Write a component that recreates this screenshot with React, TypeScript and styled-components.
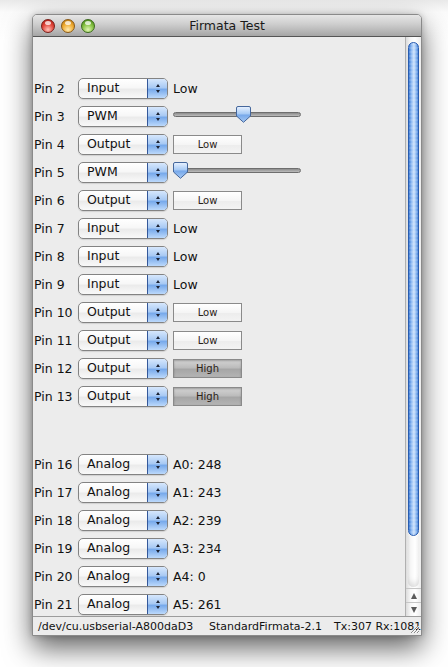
import React from 'react';
import styled, { createGlobalStyle } from 'styled-components';

const Global = createGlobalStyle`
  html, body { margin: 0; padding: 0; background: #fff; }
  body { font-family: "DejaVu Sans", "Liberation Sans", sans-serif; }
`;

const Page = styled.div`
  width: 448px;
  height: 667px;
  box-sizing: border-box;
  padding: 14px 0 0 32px;
  overflow: hidden;
  background: linear-gradient(#e9e9e9 0px, #fbfbfb 12px, #ffffff 40px);
`;

const Window = styled.div`
  width: 390px;
  height: 622px;
  box-sizing: border-box;
  display: flex;
  flex-direction: column;
  border: 1px solid #8a8a8a;
  border-radius: 5px 5px 0 0;
  background: #ececec;
  box-shadow: 0 12px 28px rgba(0, 0, 0, 0.62), 0 0 6px rgba(0, 0, 0, 0.2);
  overflow: hidden;
`;

const TitleBar = styled.div`
  height: 22px;
  flex: none;
  box-sizing: border-box;
  display: grid;
  grid-template-columns: 1fr auto 1fr;
  align-items: center;
  padding: 0 8px;
  background: linear-gradient(#e6e6e6, #cdcdcd 45%, #b4b4b4 80%, #a5a5a5);
  border-bottom: 1px solid #555;
`;

const Lights = styled.div`
  display: flex;
  gap: 6px;
`;

const lightColors: Record<string, [string, string, string, string]> = {
  red: ['#ffc0b8', '#e2483d', '#a8160e', '#7a1e18'],
  yellow: ['#ffeab0', '#f0ad33', '#b3700c', '#8a5a16'],
  green: ['#e0f6b2', '#86c243', '#3f7c12', '#3b6a1c'],
};

const Light = styled.span<{ $c: string }>`
  position: relative;
  width: 14px;
  height: 14px;
  box-sizing: border-box;
  border-radius: 50%;
  border: 1px solid ${(p) => lightColors[p.$c][3]};
  background: radial-gradient(
    circle at 50% 80%,
    ${(p) => lightColors[p.$c][0]} 0%,
    ${(p) => lightColors[p.$c][1]} 50%,
    ${(p) => lightColors[p.$c][2]} 100%
  );
  &::after {
    content: '';
    position: absolute;
    left: 3px;
    top: 1px;
    width: 6px;
    height: 4px;
    border-radius: 50%;
    background: rgba(255, 255, 255, 0.75);
  }
`;

const Title = styled.div`
  font-size: 12.5px;
  color: #1a1a1a;
  white-space: nowrap;
`;

const Body = styled.div`
  flex: 1;
  min-height: 0;
  display: flex;
`;

const Content = styled.div`
  flex: 1;
  min-width: 0;
  overflow: hidden;
  padding: 37px 0 0 1px;
  box-sizing: border-box;
  background: #ececec;
`;

const Row = styled.div`
  height: 28px;
  display: grid;
  grid-template-columns: 39px 90px auto;
  column-gap: 5px;
  align-items: center;
  font-size: 12.5px;
  color: #111;
`;

const PinLabel = styled.span`
  white-space: nowrap;
`;

const Select = styled.div`
  height: 21px;
  box-sizing: border-box;
  display: flex;
  border: 1px solid #838383;
  border-radius: 5px;
  overflow: hidden;
  background: linear-gradient(#ffffff, #f7f7f7 45%, #ebebeb 55%, #f9f9f9);
  box-shadow: 0 1px 1px rgba(0, 0, 0, 0.12);
`;

const SelectText = styled.span`
  flex: 1;
  padding-left: 8px;
  line-height: 18px;
  font-size: 12.5px;
  color: #111;
`;

const Stepper = styled.span`
  width: 19px;
  border-left: 1px solid #34589a;
  background: linear-gradient(#d6e7fc, #a9caf4 45%, #78aaeb 55%, #bcd9fb);
  display: flex;
  flex-direction: column;
  align-items: center;
  justify-content: center;
  gap: 3px;
`;

const Arrow = styled.span<{ $up?: boolean }>`
  width: 0;
  height: 0;
  border-left: 2.5px solid transparent;
  border-right: 2.5px solid transparent;
  ${(p) =>
    p.$up ? 'border-bottom: 3px solid #1b2233;' : 'border-top: 3px solid #1b2233;'}
`;

const Value = styled.span`
  white-space: nowrap;
`;

const Toggle = styled.div<{ $on?: boolean }>`
  width: 69px;
  height: 19px;
  box-sizing: border-box;
  border: 1px solid #8a8a8a;
  display: flex;
  align-items: center;
  justify-content: center;
  font-size: 10px;
  color: #2a2218;
  background: ${(p) =>
    p.$on
      ? 'linear-gradient(#d4d4d4, #bcbcbc 45%, #a6a6a6 55%, #b4b4b4)'
      : 'linear-gradient(#ffffff, #f5f5f5 50%, #ececec 51%, #f3f3f3)'};
  box-shadow: ${(p) => (p.$on ? 'inset 0 1px 2px rgba(0,0,0,0.25)' : 'none')};
`;

const Slider = styled.div`
  position: relative;
  width: 128px;
  height: 20px;
  display: flex;
  align-items: flex-start;
  padding-top: 6px;
  box-sizing: border-box;
`;

const Track = styled.div`
  width: 100%;
  height: 5px;
  box-sizing: border-box;
  border: 1px solid #6e6e6e;
  border-radius: 3px;
  background: linear-gradient(#8c8c8c, #bcbcbc);
`;

const Thumb = styled.svg`
  position: absolute;
  top: 0;
  width: 15px;
  height: 17px;
`;

const Scrollbar = styled.div`
  width: 16px;
  flex: none;
  display: flex;
  flex-direction: column;
  box-sizing: border-box;
  border-left: 1px solid #b0b0b0;
  background: linear-gradient(to right, #dcdcdc, #f6f6f6 30%, #ffffff 60%, #ececec);
`;

const ScrollTrack = styled.div`
  flex: 1;
  display: flex;
  flex-direction: column;
  padding: 5px 2px 0 2px;
`;

const ScrollThumb = styled.div`
  height: 492px;
  border: 1px solid #2a5db0;
  border-radius: 6px;
  background: repeating-linear-gradient(rgba(255, 255, 255, 0.12) 0 2px, rgba(0, 0, 0, 0) 2px 4px),
    linear-gradient(to right, #3c79d4, #8ab7f1 25%, #cfe3fc 55%, #8ab7f1 80%, #4a85d8);
`;

const TrackEnd = styled.div`
  flex: 1;
  border-radius: 0 0 6px 6px;
  box-shadow: inset 0 -6px 6px -3px rgba(0, 0, 0, 0.12);
  margin-bottom: 1px;
`;

const ScrollButton = styled.div`
  height: 13px;
  border-top: 1px solid #c6c6c6;
  display: flex;
  align-items: center;
  justify-content: center;
`;

const ScrollArrow = styled.span<{ $up?: boolean }>`
  width: 0;
  height: 0;
  border-left: 3.5px solid transparent;
  border-right: 3.5px solid transparent;
  ${(p) =>
    p.$up ? 'border-bottom: 6px solid #5a5a5a;' : 'border-top: 6px solid #5a5a5a;'}
`;

const StatusBar = styled.div`
  position: relative;
  height: 19px;
  flex: none;
  box-sizing: border-box;
  border-top: 1px solid #9c9c9c;
  background: #ececec;
  display: grid;
  grid-template-columns: 171px 125px auto;
  align-items: center;
  padding-left: 5px;
  font-size: 11px;
  color: #111;
  white-space: nowrap;
  overflow: hidden;
`;

const Grip = styled.svg`
  position: absolute;
  right: 1px;
  bottom: 1px;
  width: 11px;
  height: 11px;
`;

const Spacer = styled.div`
  height: 40px;
`;

type Pin =
  | { pin: number; mode: 'Input'; value: string }
  | { pin: number; mode: 'Output'; on: boolean }
  | { pin: number; mode: 'PWM'; pwm: number }
  | { pin: number; mode: 'Analog'; value: string };

const digital: Pin[] = [
  { pin: 2, mode: 'Input', value: 'Low' },
  { pin: 3, mode: 'PWM', pwm: 142 },
  { pin: 4, mode: 'Output', on: false },
  { pin: 5, mode: 'PWM', pwm: 0 },
  { pin: 6, mode: 'Output', on: false },
  { pin: 7, mode: 'Input', value: 'Low' },
  { pin: 8, mode: 'Input', value: 'Low' },
  { pin: 9, mode: 'Input', value: 'Low' },
  { pin: 10, mode: 'Output', on: false },
  { pin: 11, mode: 'Output', on: false },
  { pin: 12, mode: 'Output', on: true },
  { pin: 13, mode: 'Output', on: true },
];

const analog: Pin[] = [
  { pin: 16, mode: 'Analog', value: 'A0: 248' },
  { pin: 17, mode: 'Analog', value: 'A1: 243' },
  { pin: 18, mode: 'Analog', value: 'A2: 239' },
  { pin: 19, mode: 'Analog', value: 'A3: 234' },
  { pin: 20, mode: 'Analog', value: 'A4: 0' },
  { pin: 21, mode: 'Analog', value: 'A5: 261' },
];

function ThumbShape({ left, id }: { left: number; id: string }) {
  return (
    <Thumb viewBox="0 0 15 17" style={{ left }}>
      <defs>
        <linearGradient id={id} x1="0" y1="0" x2="0" y2="1">
          <stop offset="0" stopColor="#eaf3ff" />
          <stop offset="0.45" stopColor="#a9cbf5" />
          <stop offset="0.55" stopColor="#78a9ea" />
          <stop offset="1" stopColor="#a6c9f4" />
        </linearGradient>
      </defs>
      <path
        d="M2 0.5 H13 Q14.5 0.5 14.5 2 V10 L7.5 16.3 L0.5 10 V2 Q0.5 0.5 2 0.5 Z"
        fill={`url(#${id})`}
        stroke="#45679c"
        strokeWidth="1"
      />
    </Thumb>
  );
}

function PinRow({ p }: { p: Pin }) {
  let right: React.ReactNode = null;
  if (p.mode === 'Input' || p.mode === 'Analog') right = <Value>{p.value}</Value>;
  else if (p.mode === 'Output') right = <Toggle $on={p.on}>{p.on ? 'High' : 'Low'}</Toggle>;
  else
    right = (
      <Slider>
        <Track />
        <ThumbShape left={Math.round((p.pwm / 255) * 113)} id={`thumb${p.pin}`} />
      </Slider>
    );
  return (
    <Row>
      <PinLabel>Pin {p.pin}</PinLabel>
      <Select>
        <SelectText>{p.mode}</SelectText>
        <Stepper>
          <Arrow $up />
          <Arrow />
        </Stepper>
      </Select>
      {right}
    </Row>
  );
}

export default function App() {
  return (
    <Page>
      <Global />
      <Window>
        <TitleBar>
          <Lights>
            <Light $c="red" />
            <Light $c="yellow" />
            <Light $c="green" />
          </Lights>
          <Title>Firmata Test</Title>
          <span />
        </TitleBar>
        <Body>
          <Content>
            {digital.map((p) => (
              <PinRow key={p.pin} p={p} />
            ))}
            <Spacer />
            {analog.map((p) => (
              <PinRow key={p.pin} p={p} />
            ))}
          </Content>
          <Scrollbar>
            <ScrollTrack>
              <ScrollThumb />
              <TrackEnd />
            </ScrollTrack>
            <ScrollButton>
              <ScrollArrow $up />
            </ScrollButton>
            <ScrollButton>
              <ScrollArrow />
            </ScrollButton>
          </Scrollbar>
        </Body>
        <StatusBar>
          <span>/dev/cu.usbserial-A800daD3</span>
          <span>StandardFirmata-2.1</span>
          <span>Tx:307 Rx:1081</span>
          <Grip viewBox="0 0 11 11">
            <path d="M10 2 L2 10 M10 5 L5 10 M10 8 L8 10" stroke="#8a8a8a" strokeWidth="1" />
            <path d="M10 3 L3 10 M10 6 L6 10 M10 9 L9 10" stroke="#ffffff" strokeWidth="0.8" />
          </Grip>
        </StatusBar>
      </Window>
    </Page>
  );
}
